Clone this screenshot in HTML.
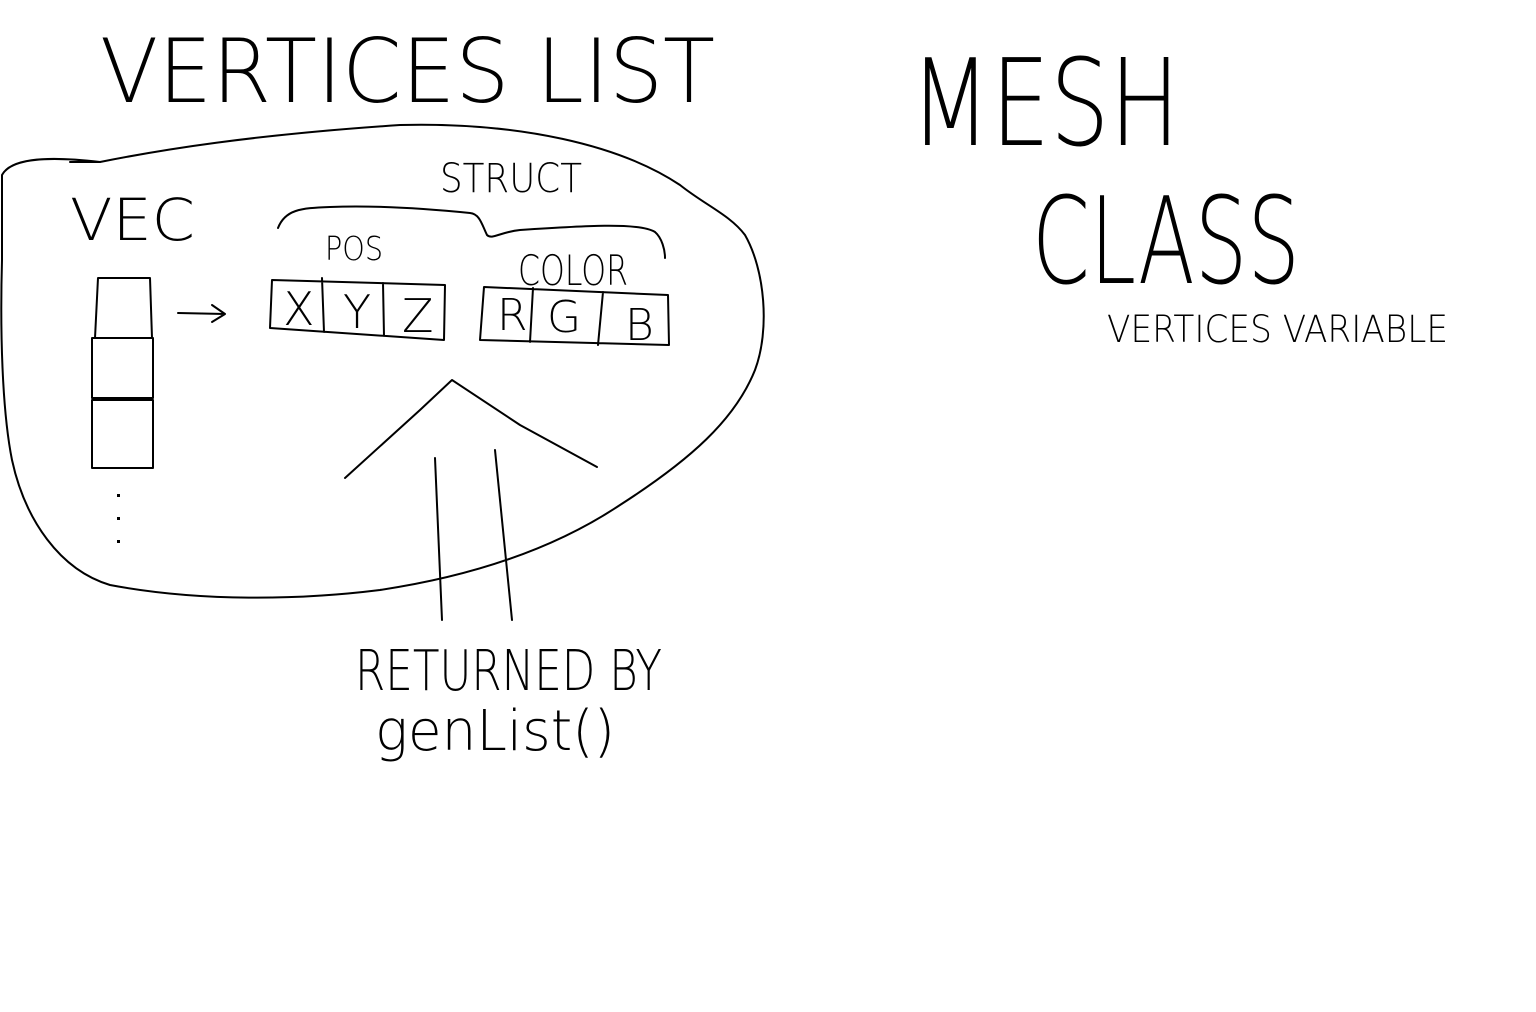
<!DOCTYPE html>
<html><head><meta charset="utf-8"><style>
html,body{margin:0;padding:0;background:#fff;width:1536px;height:1012px;overflow:hidden}
svg{display:block}
text{font-family:"DejaVu Sans","Liberation Sans",sans-serif;font-weight:200;fill:#000}
</style></head><body>
<svg width="1536" height="1012" viewBox="0 0 1536 1012" xmlns="http://www.w3.org/2000/svg">
<rect width="1536" height="1012" fill="#fff"/>
<g fill="none" stroke="#000" stroke-width="2" stroke-linejoin="round" stroke-linecap="round">
<!-- blob -->
<path d="M2,175 C10,160 40,155 100,162 C160,150 250,135 400,125 C520,122 620,145 680,185 C705,205 730,215 745,235 C765,270 770,330 755,370 C735,420 690,460 620,505 C560,545 480,575 380,590 C300,600 200,602 110,585 C60,570 25,520 12,460 C2,410 0,330 2,260 Z"/>
<path d="M70,162 L100,162"/>
<!-- brace -->
<path d="M278,228 C285,210 300,208 330,207 C380,205 440,210 470,213 C480,214 482,225 487,235 C492,240 500,232 520,230 C580,226 640,222 655,232 C662,238 665,250 665,258"/>
<!-- vec boxes -->
<path d="M98,278 L150,278 L152,338 L95,338 Z"/>
<path d="M92,338 L153,338 L153,398 L92,398 Z"/>
<path d="M92,400 L153,400 L153,468 L92,468 Z"/>
<!-- arrow -->
<path d="M178,313 L225,314 M212,305 L225,314 L212,322"/>
<!-- pos boxes -->
<path d="M272,280 L445,285 L444,340 L270,328 Z M322,278 L324,332 M383,283 L384,336"/>
<!-- color boxes -->
<path d="M484,287 L668,295 L669,345 L480,340 Z M533,288 L530,342 M603,292 L598,345"/>
<!-- chevron -->
<path d="M345,478 L420,410 L452,380 L520,425 L597,467"/>
<path d="M435,458 L442,620"/>
<path d="M495,450 L512,620"/>
</g>
<g fill="#000">
<rect x="117" y="494" width="3" height="3"/>
<rect x="117" y="517" width="3" height="3"/>
<rect x="117" y="540" width="3" height="3"/>
</g>
<text x="100" y="102" font-size="88" textLength="615" lengthAdjust="spacingAndGlyphs">VERTICES LIST</text>
<text x="910" y="145" font-size="120" textLength="270" lengthAdjust="spacingAndGlyphs">MESH</text>
<text x="1032" y="283" font-size="120" textLength="268" lengthAdjust="spacingAndGlyphs">CLASS</text>
<text x="1107" y="342" font-size="37" textLength="341" lengthAdjust="spacingAndGlyphs">VERTICES VARIABLE</text>
<text x="440" y="192" font-size="40" textLength="142" lengthAdjust="spacingAndGlyphs">STRUCT</text>
<text x="70" y="240" font-size="58" textLength="125" lengthAdjust="spacingAndGlyphs">VEC</text>
<text x="325" y="260" font-size="33" textLength="58" lengthAdjust="spacingAndGlyphs">POS</text>
<text x="518" y="285" font-size="42" textLength="110" lengthAdjust="spacingAndGlyphs">COLOR</text>
<text x="283" y="325" font-size="46">X</text>
<text x="343" y="328" font-size="46">Y</text>
<text x="402" y="332" font-size="46">Z</text>
<text x="497" y="330" font-size="44">R</text>
<text x="547" y="332" font-size="44">G</text>
<text x="625" y="340" font-size="44">B</text>
<text x="355" y="690" font-size="56" textLength="307" lengthAdjust="spacingAndGlyphs">RETURNED BY</text>
<text x="375" y="750" font-size="56" textLength="240" lengthAdjust="spacingAndGlyphs">genList()</text>
</svg>
</body></html>
